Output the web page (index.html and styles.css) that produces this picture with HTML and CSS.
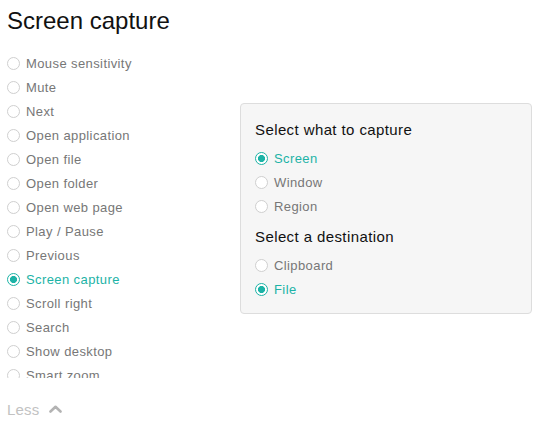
FILE: index.html
```html
<!DOCTYPE html>
<html lang="en">

<head>
    <meta charset="UTF-8">
    <meta name="viewport" content="width=device-width, initial-scale=1.0">
    <title>Screen capture</title>
    <link rel="stylesheet" href="styles.css">
</head>

<body>

    <h1 class="title">Screen capture</h1>

    <div class="content">
        <div class="actions">
            <label class="option"><input type="radio" name="action"><span>Mouse sensitivity</span></label>
            <label class="option"><input type="radio" name="action"><span>Mute</span></label>
            <label class="option"><input type="radio" name="action"><span>Next</span></label>
            <label class="option"><input type="radio" name="action"><span>Open application</span></label>
            <label class="option"><input type="radio" name="action"><span>Open file</span></label>
            <label class="option"><input type="radio" name="action"><span>Open folder</span></label>
            <label class="option"><input type="radio" name="action"><span>Open web page</span></label>
            <label class="option"><input type="radio" name="action"><span>Play / Pause</span></label>
            <label class="option"><input type="radio" name="action"><span>Previous</span></label>
            <label class="option"><input type="radio" name="action" checked><span>Screen capture</span></label>
            <label class="option"><input type="radio" name="action"><span>Scroll right</span></label>
            <label class="option"><input type="radio" name="action"><span>Search</span></label>
            <label class="option"><input type="radio" name="action"><span>Show desktop</span></label>
            <label class="option"><input type="radio" name="action"><span>Smart zoom</span></label>
        </div>

        <div class="panel">
            <h2>Select what to capture</h2>
            <label class="option"><input type="radio" name="target" checked><span>Screen</span></label>
            <label class="option"><input type="radio" name="target"><span>Window</span></label>
            <label class="option"><input type="radio" name="target"><span>Region</span></label>

            <h2 class="second">Select a destination</h2>
            <label class="option"><input type="radio" name="dest"><span>Clipboard</span></label>
            <label class="option"><input type="radio" name="dest" checked><span>File</span></label>
        </div>
    </div>

    <div class="less">
        Less
        <svg width="13" height="8" viewBox="0 0 13 8">
            <polyline points="1.5,6.5 6.5,1.8 11.5,6.5" fill="none" stroke="#b3b3b3" stroke-width="2.6" stroke-linecap="round" stroke-linejoin="round"/>
        </svg>
    </div>

</body>

</html>
```

FILE: styles.css
```css
body {
    font-family: "Liberation Sans", Arial, sans-serif;
    background-color: #ffffff;
    color: #777777;
    margin: 0;
    padding: 0 7px;
}

.title {
    font-size: 24px;
    font-weight: normal;
    line-height: 28px;
    color: #111111;
    margin: 7px 0 0 0;
}

.content {
    display: flex;
    align-items: flex-start;
    margin-top: 16px;
}

.actions {
    width: 233px;
    height: 327px;
    overflow: hidden;
}

.option {
    display: flex;
    align-items: center;
    height: 24px;
    font-size: 13px;
    letter-spacing: 0.4px;
    color: #777777;
}

.option input {
    appearance: none;
    -webkit-appearance: none;
    width: 13px;
    height: 13px;
    margin: 0 6px 0 0;
    border: 1px solid #cfcfcf;
    border-radius: 50%;
    background-color: #ffffff;
    box-sizing: border-box;
    flex-shrink: 0;
}

.option input:checked {
    border-color: #1cb3a6;
    background: radial-gradient(circle, #1cb3a6 0, #1cb3a6 3.3px, #ffffff 3.8px);
}

.option input:checked + span {
    color: #1cb3a6;
}

.panel {
    width: 292px;
    margin-top: 52px;
    padding: 16px 14px 12px;
    background-color: #f6f6f6;
    border: 1px solid #dddddd;
    border-radius: 4px;
    box-sizing: border-box;
}

.panel h2 {
    font-size: 15px;
    font-weight: normal;
    line-height: 20px;
    letter-spacing: 0.4px;
    color: #111111;
    margin: 0 0 6px 0;
}

.panel h2.second {
    margin-top: 9px;
    margin-bottom: 6px;
}

.less {
    display: flex;
    align-items: center;
    gap: 9px;
    margin-top: 21px;
    height: 20px;
    font-size: 15px;
    color: #c2c2c2;
    letter-spacing: 0.2px;
}
```
